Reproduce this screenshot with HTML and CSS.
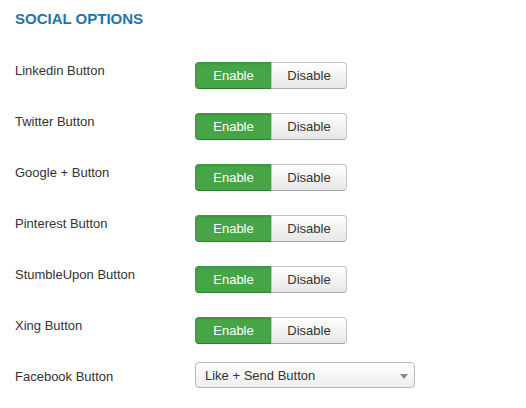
FILE: index.html
```html
<!DOCTYPE html>
<html>
<head>
<meta charset="utf-8">
<link rel="stylesheet" href="styles.css">
</head>
<body>
<div class="panel">
  <h3 class="title">SOCIAL OPTIONS</h3>
  <div class="row">
    <label class="label">Linkedin Button</label>
    <div class="btn-group"><span class="btn on">Enable</span><span class="btn off">Disable</span></div>
  </div>
  <div class="row">
    <label class="label">Twitter Button</label>
    <div class="btn-group"><span class="btn on">Enable</span><span class="btn off">Disable</span></div>
  </div>
  <div class="row">
    <label class="label">Google + Button</label>
    <div class="btn-group"><span class="btn on">Enable</span><span class="btn off">Disable</span></div>
  </div>
  <div class="row">
    <label class="label">Pinterest Button</label>
    <div class="btn-group"><span class="btn on">Enable</span><span class="btn off">Disable</span></div>
  </div>
  <div class="row">
    <label class="label">StumbleUpon Button</label>
    <div class="btn-group"><span class="btn on">Enable</span><span class="btn off">Disable</span></div>
  </div>
  <div class="row">
    <label class="label">Xing Button</label>
    <div class="btn-group"><span class="btn on">Enable</span><span class="btn off">Disable</span></div>
  </div>
  <div class="row row-select">
    <label class="label">Facebook Button</label>
    <div class="select"><span>Like + Send Button</span><span class="caret"></span></div>
  </div>
</div>
</body>
</html>
```
FILE: styles.css
```css
html, body {
  margin: 0;
  padding: 0;
  background: #fff;
}
body {
  font-family: "Liberation Sans", Arial, sans-serif;
  font-size: 13px;
  color: #333;
}
.panel {
  padding: 10px 15px 0 15px;
}
.title {
  margin: 0 0 35px 0;
  font-size: 15px;
  line-height: 17px;
  font-weight: bold;
  color: #1f74ad;
}
.row {
  display: flex;
  align-items: flex-start;
  height: 51px;
}
.label {
  width: 180px;
  flex: none;
  padding-top: 0;
  line-height: 18px;
}
.btn-group {
  display: flex;
}
.btn {
  display: block;
  box-sizing: border-box;
  height: 27px;
  line-height: 25px;
  text-align: center;
  font-size: 13px;
  border: 1px solid;
}
.btn.on {
  width: 77px;
  color: #fff;
  background: #46a546;
  border-color: #3f9a3f #3f9a3f #2f7d2f;
  border-radius: 4px 0 0 4px;
  box-shadow: inset 0 1px 2px rgba(0,0,0,0.12);
}
.btn.off {
  width: 76px;
  margin-left: -1px;
  color: #333;
  background: linear-gradient(#ffffff, #e6e6e6);
  border-color: #c5c5c5 #c5c5c5 #a8a8a8;
  border-radius: 0 4px 4px 0;
}
.row-select {
  margin-top: -6px;
}
.row-select .label {
  padding-top: 6px;
}
.select {
  box-sizing: border-box;
  width: 220px;
  height: 26px;
  border: 1px solid #b8b8b8;
  border-radius: 4px;
  background: linear-gradient(#ffffff, #eeeeee);
  display: flex;
  align-items: center;
  justify-content: space-between;
  padding: 1px 6px 0 9px;
  color: #333;
  line-height: 23px;
}
.caret {
  width: 0;
  height: 0;
  border-left: 4px solid transparent;
  border-right: 4px solid transparent;
  border-top: 5px solid #888;
  margin-top: 1px;
}
```
